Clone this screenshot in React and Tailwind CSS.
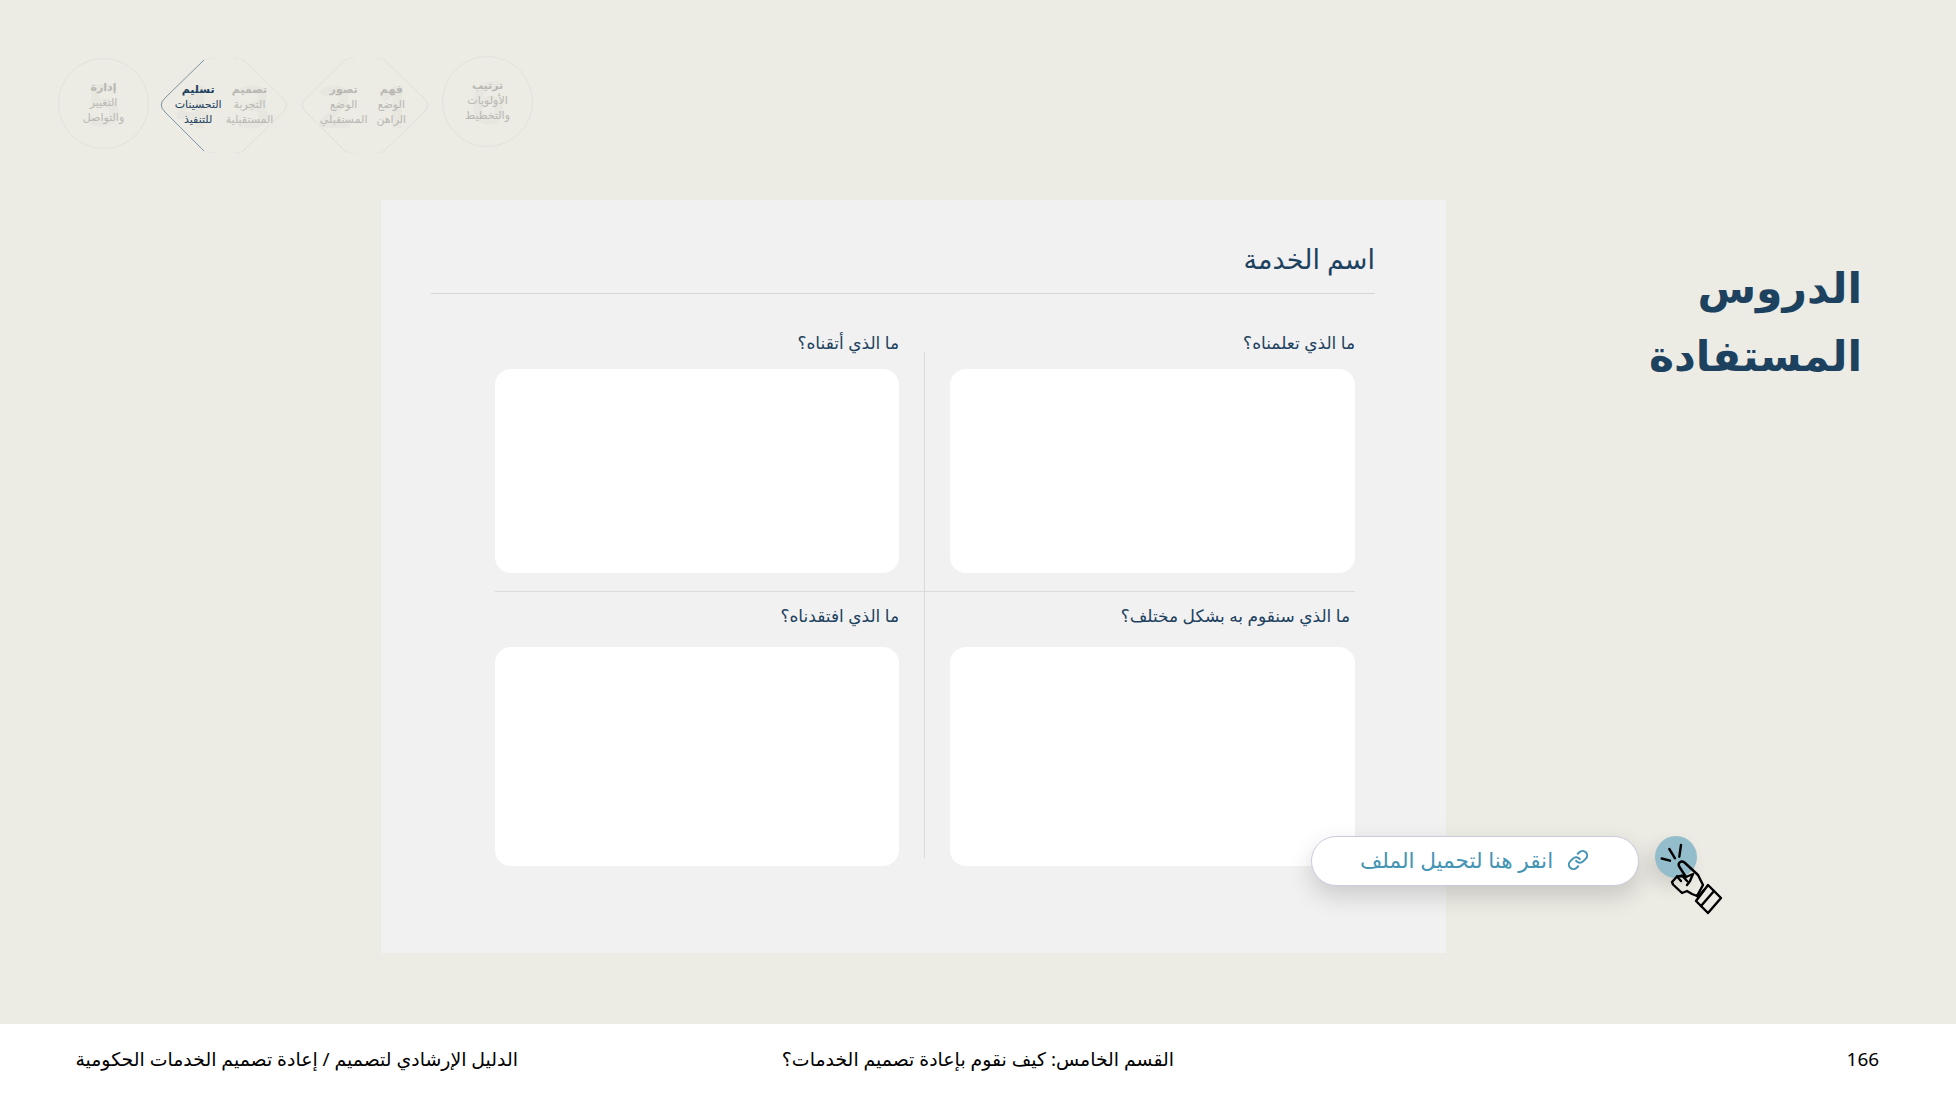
import { Link } from "lucide-react";

const F = "font-['Noto_Sans','DejaVu_Sans',sans-serif]";

function Steps({ lines, active }) {
  return (
    <div dir="rtl" className={`relative z-10 flex flex-col items-center text-[11px] leading-[15px] whitespace-nowrap ${active ? "text-[#1d4260]" : "text-[#b9b8b3]"}`}>
      <span className="font-bold">{lines[0]}</span>
      <span>{lines[1]}</span>
      <span>{lines[2]}</span>
    </div>
  );
}

function Num({ children, className }) {
  return <span className={`absolute text-[60px] leading-none font-bold text-[#e7e6df] ${className}`}>{children}</span>;
}

function Hex({ dark, nums, a, b, activeA, gap, className }) {
  return (
    <div className={`relative w-[128px] h-[95px] flex items-center justify-center pb-[4px] ${className}`}>
      <svg viewBox="0 0 128 95" className="absolute inset-0 w-full h-full overflow-visible" fill="none">
        <path d="M44 2 L5 40 Q-2.5 47 5 54 L44 93" stroke={dark ? "#7f93a3" : "#e0dfd9"} strokeWidth="1" />
        <path d="M82 1 L123 40 Q130.5 47 123 54 L82 94" stroke="#e0dfd9" strokeWidth="1" />
        <path d="M44 2 Q48 -1 54 1 M74 1 Q78 -1 82 1 M44 93 Q48 96 54 94 M74 94 Q78 96 82 94" stroke="#e6e5df" strokeWidth="1" />
      </svg>
      <Num className="left-[16px] top-[17px]">{nums[0]}</Num>
      <Num className="left-[76px] top-[17px]">{nums[1]}</Num>
      <div className={`flex ${gap} items-center`}>
        <Steps lines={a} active={activeA} />
        <Steps lines={b} />
      </div>
    </div>
  );
}

function Circle({ num, lines, className }) {
  return (
    <div className={`relative w-[91px] h-[91px] rounded-full border border-[#e2e1db] flex items-center justify-center pb-[4px] ${className}`}>
      <Num className="left-[28px] top-[14px]">{num}</Num>
      <Steps lines={lines} />
    </div>
  );
}

function Hand() {
  return (
    <svg viewBox="0 0 100 100" className="absolute left-[-15px] top-[-11px] w-[100px] h-[100px]" fill="none" stroke="#000" strokeWidth="2.4" strokeLinecap="round" strokeLinejoin="round">
      <path d="M21.7 33.5 L30 35.7 M29.3 24 L35 33.3 M41 20 L39.3 31.7" />
      <path d="M39.5 42 C37 38 41 35 44.5 37.5 L58 50 L63 60 L57 71 L52 69 L47 66 L42 68 L33 59.5 L32 57 L37 51.5 L41 51 L46 52 Z" />
      <path d="M37 51.5 L41 56 M42 50.5 L47 56 M46 52 L53 49 L50 56 L47 60" />
      <path d="M68 60 L81 73 L68 88 L56 76 Z" />
      <path d="M64 65 L58 72 M74 66 L61 81" />
    </svg>
  );
}

function Cell({ label, h, pr, className, mt }) {
  return (
    <div className={`flex flex-col items-stretch ${className}`}>
      <div dir="rtl" className={`text-[17px] leading-[24px] text-[#1d4260] ${pr}`}>{label}</div>
      <div className={`${mt} ${h} bg-white rounded-[16px]`} />
    </div>
  );
}

export default function App() {
  return (
    <div className={`w-[1956px] h-[1100px] bg-[#ecebe4] flex flex-col overflow-hidden ${F}`}>
      <div className="flex-1 min-h-0">
        <div className="flex items-start pl-[58px] pt-[56px] h-[200px] gap-[13px]">
          <Circle num="5" className="mt-[2px]" lines={["إدارة", "التغيير", "والتواصل"]} />
          <Hex dark className="mt-[2px] -ml-[2px]" nums={["4", "3"]} activeA gap="gap-[4px]" a={["تسليم", "التحسينات", "للتنفيذ"]} b={["تصميم", "التجربة", "المستقبلية"]} />
          <Hex className="mt-[2px] pr-[4px]" nums={["2", "1"]} gap="gap-[9px]" a={["تصور", "الوضع", "المستقبلي"]} b={["فهم", "الوضع", "الراهن"]} />
          <Circle num="6" lines={["ترتيب", "الأولويات", "والتخطيط"]} />
        </div>
        <div className="flex items-start">
          <div className="relative ml-[381px] w-[1065px] h-[753px] bg-[#f1f1f1] pl-[50px] pr-[71px]">
            <div dir="rtl" className="h-[94px] border-b border-[#d6d6d3] pt-[37px] text-[27px] leading-[44px] font-medium text-[#1d4260]">اسم الخدمة</div>
            <div className="relative pl-[64px] pr-[20px] pt-[37px] grid grid-cols-[404px_405px] gap-x-[51px]">
              <Cell label="ما الذي أتقناه؟" h="h-[204px]" mt="mt-[14px]" />
              <Cell label="ما الذي تعلمناه؟" h="h-[204px]" mt="mt-[14px]" />
              <div className="col-span-2 h-px bg-[#dbdbd8] mt-[18px]" />
              <Cell className="mt-[12px]" label="ما الذي افتقدناه؟" h="h-[219px]" mt="mt-[19px]" />
              <Cell className="mt-[12px]" pr="pr-[5px]" label="ما الذي سنقوم به بشكل مختلف؟" h="h-[219px]" mt="mt-[19px]" />
              <div className="absolute left-[493px] top-[58px] w-px h-[506px] bg-[#d9d9d6]" />
            </div>
            <div className="absolute left-[930px] top-[636px] w-[328px] h-[50px] rounded-full bg-white border border-[#cdc9df] shadow-[0_10px_24px_rgba(0,0,0,0.16)] flex items-center pl-[48px] pb-[3px] gap-[14px] text-[#4494b4] z-10">
              <span dir="rtl" className="text-[21.6px] leading-none whitespace-nowrap">انقر هنا لتحميل الملف</span>
              <Link className="w-[22px] h-[22px]" strokeWidth={2.2} />
            </div>
            <div className="absolute left-[1274px] top-[636px] w-[42px] h-[42px] rounded-full bg-[#94bdcb] shadow-[-6px_8px_18px_rgba(0,0,0,0.12)]">
              <Hand />
            </div>
          </div>
          <div dir="rtl" className="flex-1 pr-[94px] pt-[53px] text-[42.5px] leading-[68px] font-bold text-[#1d4260]">
            <div>الدروس</div>
            <div>المستفادة</div>
          </div>
        </div>
      </div>
      <div className="h-[76px] bg-white flex items-center text-[18.9px] text-black pb-[6px]">
        <div dir="rtl" className="ml-[76px] w-[442px] text-right leading-none whitespace-nowrap">الدليل الإرشادي لتصميم / إعادة تصميم الخدمات الحكومية</div>
        <div dir="rtl" className="ml-[264px] w-[392px] leading-none whitespace-nowrap">القسم الخامس: كيف نقوم بإعادة تصميم الخدمات؟</div>
        <div className="ml-auto mr-[77px] leading-none">166</div>
      </div>
    </div>
  );
}
